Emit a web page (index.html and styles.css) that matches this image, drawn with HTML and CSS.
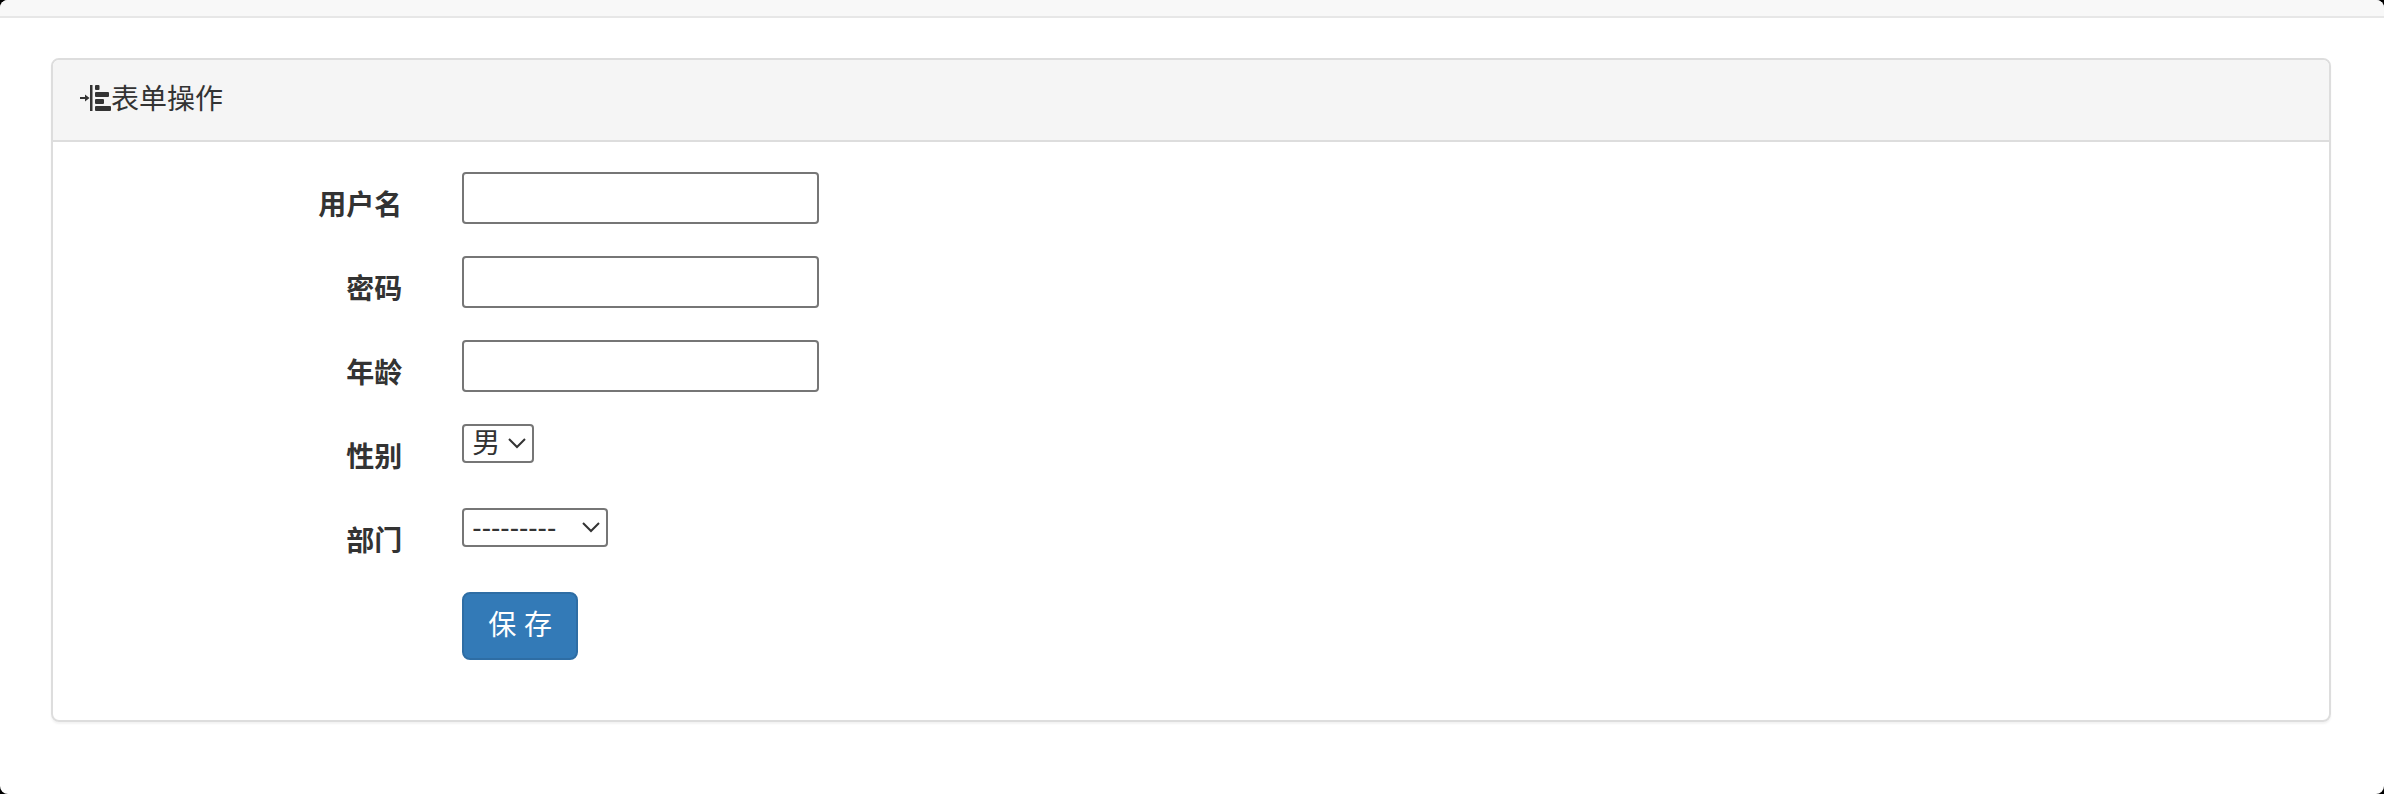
FILE: index.html
```
<!DOCTYPE html>
<html lang="zh-CN">
<head>
    <meta charset="UTF-8">
    <meta name="viewport" content="width=device-width, initial-scale=1">
    <title>表单操作</title>
    <link rel="stylesheet" href="styles.css">
</head>
<body>
    <nav class="navbar"></nav>
    <div class="container">
        <div class="panel">
            <div class="panel-heading">
                <svg class="icon" viewBox="0 0 28 28" aria-hidden="true">
                    <path d="M-3 13h5v-2.500l4.500 3.500-4.500 3.500v-2.500h-5zM7 1h2.500v26H7z"/>
                    <rect x="12" y="1" width="4.500" height="5" rx="1"/>
                    <rect x="12" y="8" width="14" height="5" rx="1"/>
                    <rect x="12" y="15" width="9" height="5" rx="1"/>
                    <rect x="12" y="22" width="16" height="5" rx="1"/>
                </svg>
                <h3 class="panel-title">表单操作</h3>
            </div>
            <form class="panel-body">
                <div class="form-group">
                    <label for="username">用户名</label>
                    <div class="field"><input type="text" id="username" name="username"></div>
                </div>
                <div class="form-group">
                    <label for="password">密码</label>
                    <div class="field"><input type="password" id="password" name="password"></div>
                </div>
                <div class="form-group">
                    <label for="age">年龄</label>
                    <div class="field"><input type="text" id="age" name="age"></div>
                </div>
                <div class="form-group">
                    <label for="gender">性别</label>
                    <div class="field">
                        <div class="select-wrap">
                            <select id="gender" name="gender">
                                <option value="1">男</option>
                            </select>
                            <svg class="arrow" viewBox="0 0 18 12" aria-hidden="true"><path d="M1 2l8 8 8-8"/></svg>
                        </div>
                    </div>
                </div>
                <div class="form-group">
                    <label for="depart">部门</label>
                    <div class="field">
                        <div class="select-wrap">
                            <select id="depart" name="depart" class="select-wide">
                                <option value="">---------</option>
                            </select>
                            <svg class="arrow" viewBox="0 0 18 12" aria-hidden="true"><path d="M1 2l8 8 8-8"/></svg>
                        </div>
                    </div>
                </div>
                <div class="form-group">
                    <div class="field field-offset">
                        <button type="submit" class="btn">保 存</button>
                    </div>
                </div>
            </form>
        </div>
    </div>
</body>
</html>
```

FILE: styles.css
```
* {
    box-sizing: border-box;
}

html {
    background-color: #000;
}

body {
    margin: 0;
    min-height: 100vh;
    background-color: #fff;
    border-radius: 8px;
    overflow: hidden;
    font-family: "Liberation Sans", "Noto Sans CJK SC", sans-serif;
    font-size: 28px;
    line-height: 40px;
    color: #333;
}

.navbar {
    height: 18px;
    background-color: #f8f8f8;
    border-bottom: 2px solid #e7e7e7;
}

.container {
    padding: 40px 53px 0 51px;
}

.panel {
    border: 2px solid #ddd;
    border-radius: 8px;
    box-shadow: 0 2px 2px rgba(0, 0, 0, 0.05);
}

.panel-heading {
    display: flex;
    align-items: center;
    padding: 20px 30px;
    background-color: #f5f5f5;
    border-bottom: 2px solid #ddd;
    border-radius: 6px 6px 0 0;
}

.panel-title {
    margin: 0;
    font-size: 28px;
    font-weight: normal;
}

.icon {
    width: 28px;
    height: 28px;
    margin-bottom: 4px;
    overflow: visible;
    fill: #333;
}

.panel-body {
    padding: 30px 0;
}

.form-group {
    display: grid;
    grid-template-columns: 1fr 5fr;
    margin-bottom: 30px;
}

label {
    padding: 14px 30px 0;
    text-align: right;
    font-weight: bold;
}

.field {
    display: flex;
    align-items: flex-start;
    padding: 0 30px;
}

.field-offset {
    grid-column: 2;
}

input,
select {
    margin: 0;
    border: 2px solid #767676;
    border-radius: 4px;
    background-color: #fff;
    color: #333;
    font: inherit;
}

input {
    width: 357px;
    height: 52px;
    padding: 2px 4px;
}

.select-wrap {
    position: relative;
}

select {
    display: block;
    appearance: none;
    width: 72px;
    height: 39px;
    padding: 0 8px;
    line-height: 35px;
}

.select-wide {
    width: 146px;
}

/* arrow drawn over the select */
.arrow {
    position: absolute;
    top: 13px;
    right: 8px;
    width: 18px;
    height: 12px;
    fill: none;
    stroke: #333;
    stroke-width: 2;
    pointer-events: none;
}

.btn {
    padding: 12px 24px;
    border: 2px solid #2e6da4;
    border-radius: 8px;
    background-color: #337ab7;
    color: #fff;
    font: inherit;
    cursor: pointer;
}
```
